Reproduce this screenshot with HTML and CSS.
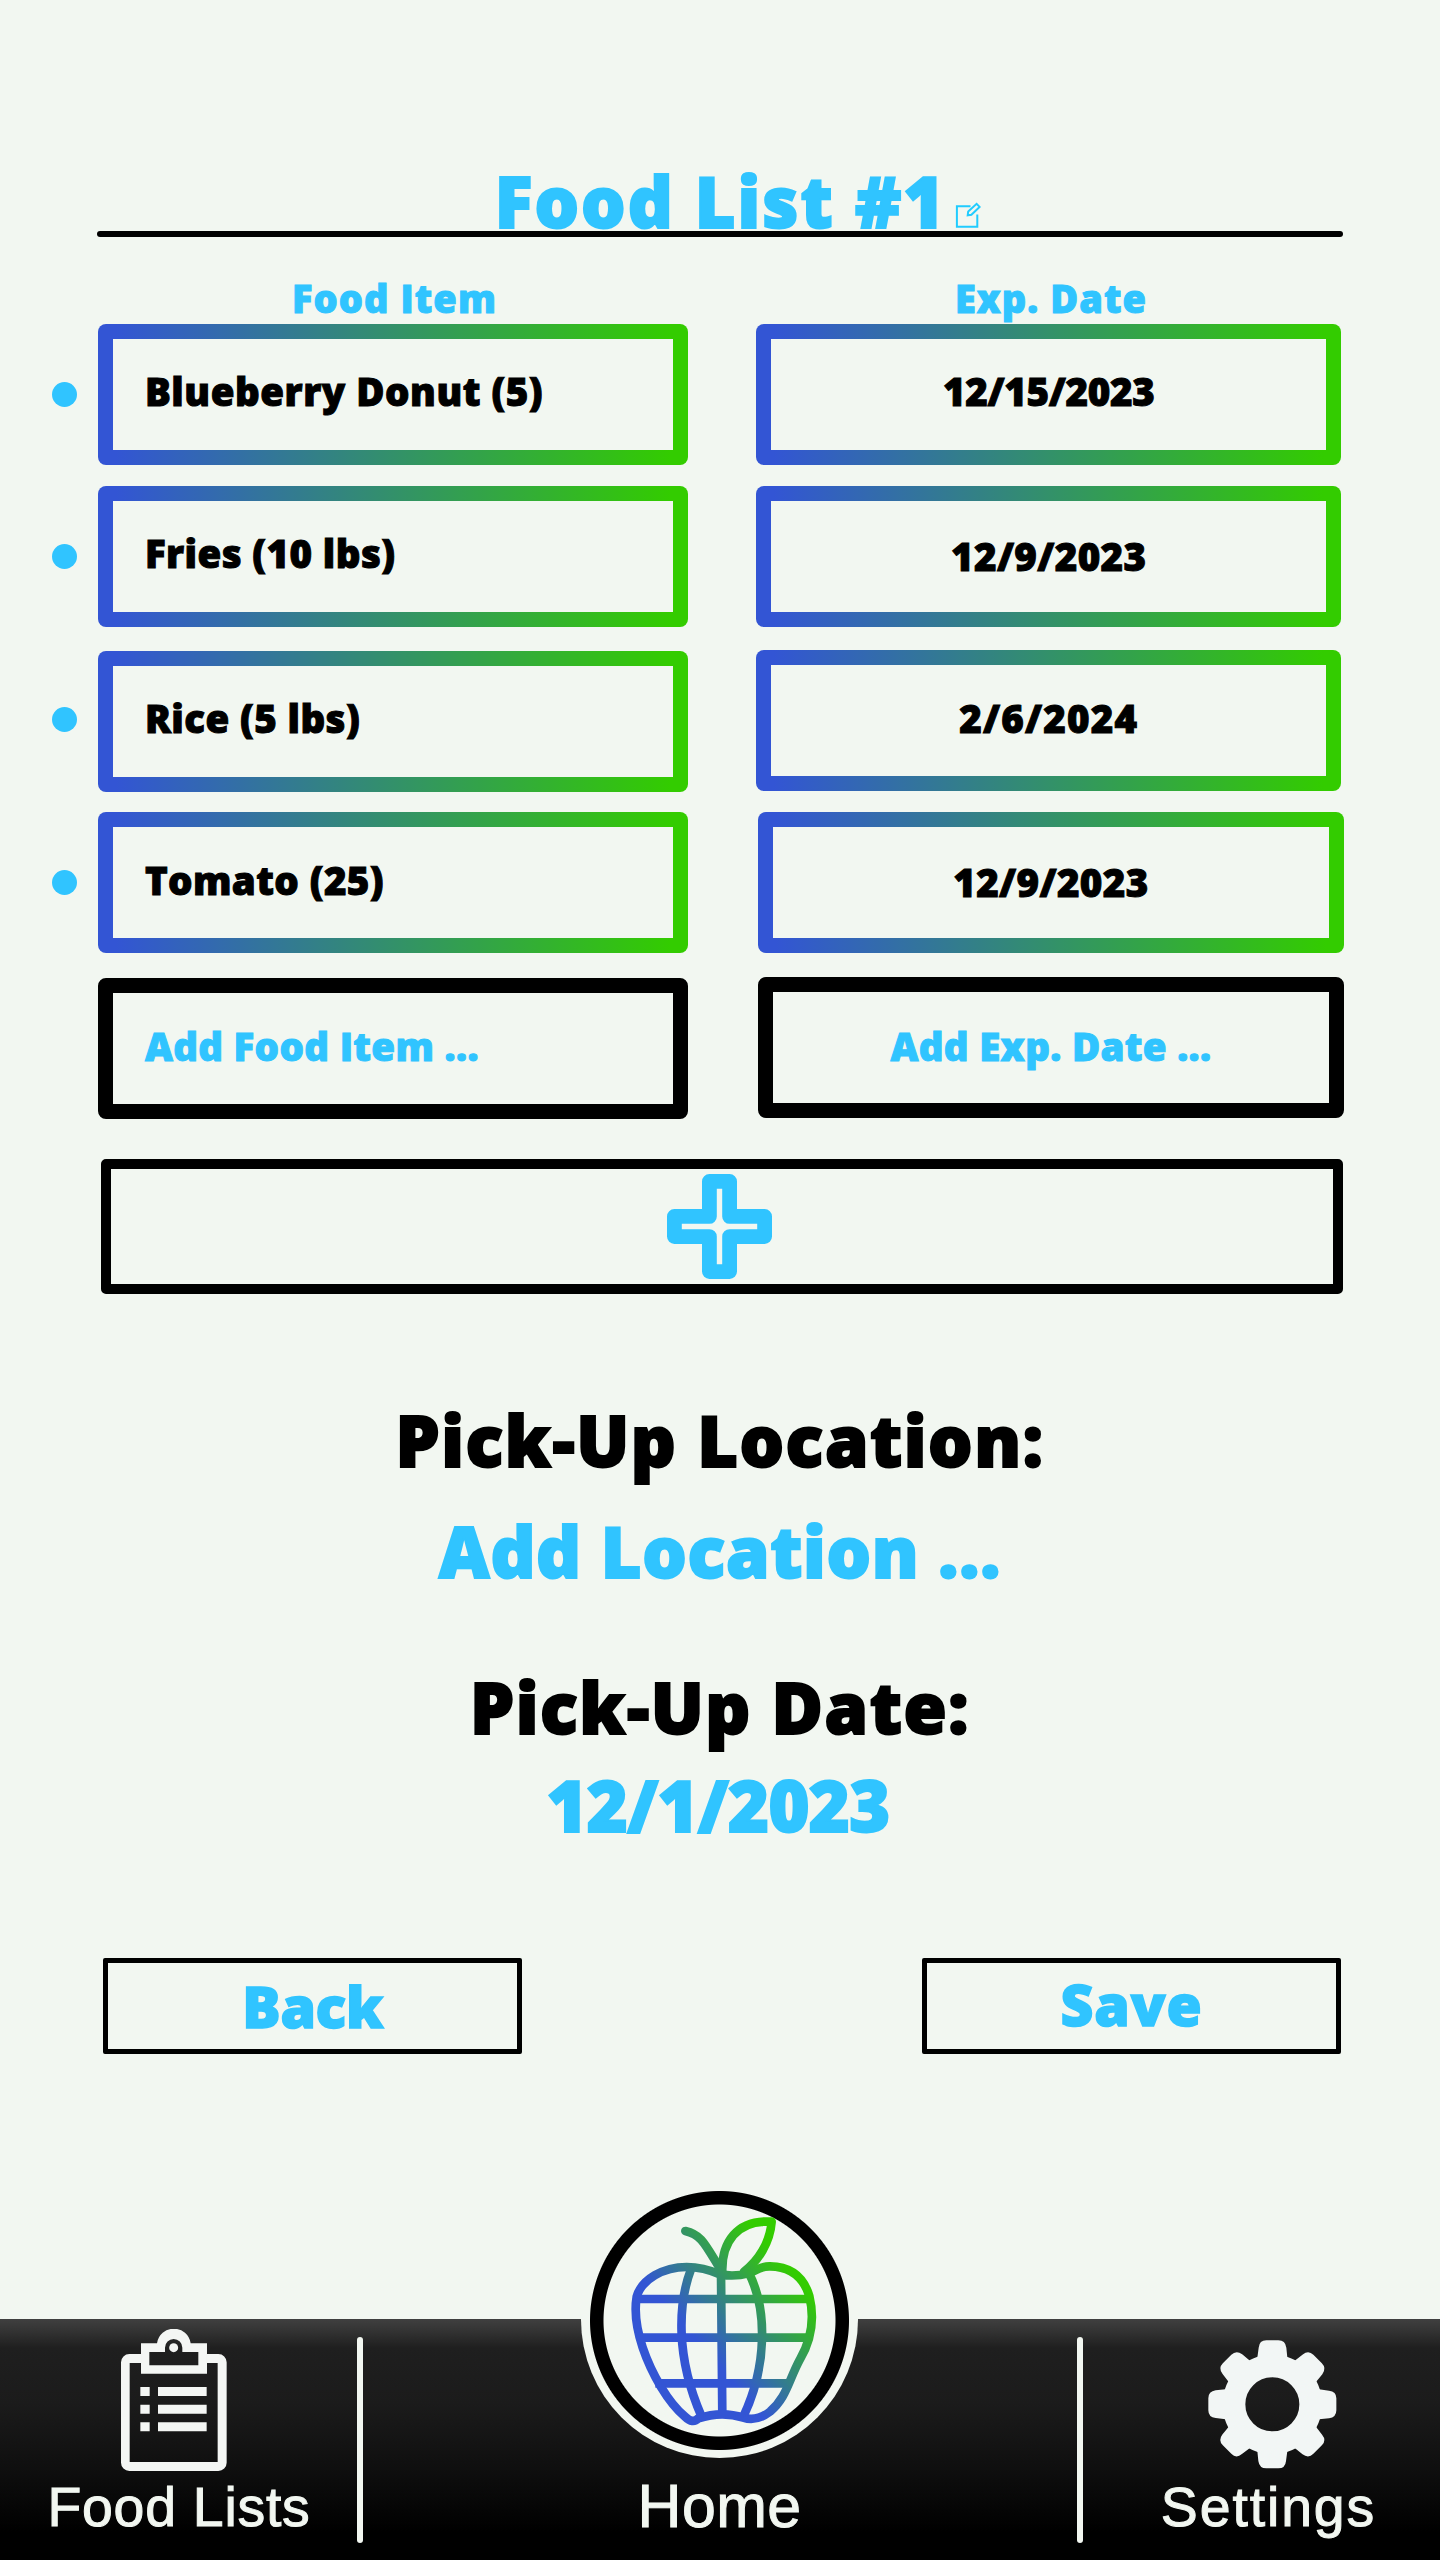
FILE: index.html
```html
<!DOCTYPE html>
<html lang="en">
<head>
<meta charset="utf-8">
<title>Food List #1</title>
<link rel="stylesheet" href="styles.css">
</head>
<body>
<main class="screen">
  <header class="title-bar">
    <h1 class="title">Food List #1</h1>
    <svg class="edit-icon" viewBox="956 202 26 26" fill="none" stroke="#20ccff" stroke-width="2"><path d="M971.5 206.3H957.9V226.7H978.3V214.5"/><path d="M968.7 215.3L969.2 211.4L977.6 203.8L980.6 206.9L972.4 214.8Z"/></svg>
  </header>
  <div class="rule"></div>

  <section class="list">
    <div class="list-head">
      <h2 class="head-item">Food Item</h2>
      <h2 class="head-date">Exp. Date</h2>
    </div>
    <div class="row row-1">
      <span class="dot"></span>
      <div class="cell cell-item"><span class="t">Blueberry Donut (5)</span></div>
      <div class="cell cell-date"><span class="t t-long">12/15/2023</span></div>
    </div>
    <div class="row row-2">
      <span class="dot"></span>
      <div class="cell cell-item"><span class="t">Fries (10 lbs)</span></div>
      <div class="cell cell-date"><span class="t">12/9/2023</span></div>
    </div>
    <div class="row row-3">
      <span class="dot"></span>
      <div class="cell cell-item"><span class="t">Rice (5 lbs)</span></div>
      <div class="cell cell-date"><span class="t t-short">2/6/2024</span></div>
    </div>
    <div class="row row-4">
      <span class="dot"></span>
      <div class="cell cell-item"><span class="t">Tomato (25)</span></div>
      <div class="cell cell-date"><span class="t">12/9/2023</span></div>
    </div>
    <div class="row row-5">
      <div class="cell cell-item cell-add"><span class="t">Add Food Item ...</span></div>
      <div class="cell cell-date cell-add"><span class="t">Add Exp. Date ...</span></div>
    </div>
    <div class="add-row">
      <svg class="plus-icon" viewBox="0 0 105 105" fill="none" stroke="#30c4ff" stroke-width="14.8" stroke-linejoin="round"><path d="M42.4 7.4H62.6V42.4H97.6V62.6H62.6V97.6H42.4V62.6H7.4V42.4H42.4Z"/></svg>
    </div>
  </section>

  <section class="pickup">
    <h2 class="label label-location">Pick-Up Location:</h2>
    <p class="value value-location">Add Location ...</p>
    <h2 class="label label-date">Pick-Up Date:</h2>
    <p class="value value-date">12/1/2023</p>
  </section>

  <div class="actions">
    <div class="button"><span class="bt">Back</span></div>
    <div class="button button-save"><span class="bt">Save</span></div>
  </div>
</main>

<nav class="nav">
  <div class="nav-item nav-lists">
    <svg class="icon-lists" viewBox="360 84 324 430" fill="#f4f6f4"><path d="M423 159H388A25 25 0 0 0 363 184V485A25 25 0 0 0 388 510H655A25 25 0 0 0 680 485V184A25 25 0 0 0 655 159H621V186H653V483H389V186H423Z"/><path fill-rule="evenodd" d="M423 127H471A51 51 0 0 1 572 127H621V218H423ZM448 153V193H595V153H547V140A26 26 0 0 0 495 140V153Z"/><circle cx="521" cy="140" r="13.5"/><path d="M421 258H449V285H421ZM474 258H620V285H474ZM421 311H449V338H421ZM474 311H620V338H474ZM421 364H449V391H421ZM474 364H620V391H474Z"/></svg>
    <span class="nav-label">Food Lists</span>
  </div>
  <span class="divider"></span>
  <div class="nav-item nav-home">
    <div class="home-badge">
      <svg class="icon-apple" viewBox="180 140 564 634" fill="none" stroke="url(#apple)" stroke-width="26" stroke-linecap="round" stroke-linejoin="round">
        <defs><linearGradient id="apple" gradientUnits="userSpaceOnUse" x1="400" y1="536" x2="664" y2="306"><stop offset="0" stop-color="#3355d4"/><stop offset="1" stop-color="#33cc00"/></linearGradient></defs>
        <path d="M453 316C420 302 390 293 350 293C280 293 215 330 200 382C192 430 203 490 218 535C245 615 295 700 345 742Q368 765 385 747Q455 724 520 745C550 755 575 746 600 727C650 685 655 635 690 570C725 510 735 450 718 380C700 320 660 292 600 291C570 290 560 304 535 312C510 319 480 320 453 316Z"/>
        <path d="M346 185C395 196 405 225 453 303"/>
        <path d="M457 312C453 220 500 150 605 157C600 220 565 275 522 307"/>
        <path stroke-linecap="butt" d="M453 310L457 740M363 300C325 400 315 560 395 742M537 312C592 420 592 590 520 742M200 389H722M208 505H716M256 642H664"/>
      </svg>
    </div>
    <span class="nav-label label-home">Home</span>
  </div>
  <span class="divider"></span>
  <div class="nav-item nav-settings">
    <svg class="icon-gear" viewBox="-196 -196 392 392" fill="#f2f6f5">
      <defs><path id="tooth" d="M-45 -140L-41 -170Q-39 -192 -18 -192H18Q39 -192 42 -170L45 -140Z"/></defs>
      <circle r="115" fill="none" stroke="#f2f6f5" stroke-width="68"/>
      <use href="#tooth"/><use href="#tooth" transform="rotate(45)"/><use href="#tooth" transform="rotate(90)"/><use href="#tooth" transform="rotate(135)"/><use href="#tooth" transform="rotate(180)"/><use href="#tooth" transform="rotate(225)"/><use href="#tooth" transform="rotate(270)"/><use href="#tooth" transform="rotate(315)"/>
    </svg>
    <span class="nav-label">Settings</span>
  </div>
</nav>
</body>
</html>
```

FILE: styles.css
```css
* { box-sizing: border-box; margin: 0; }
body {
  width: 1440px; height: 2560px;
  display: flex; flex-direction: column; justify-content: space-between;
  background: #f2f7f1; color: #000;
  font-family: "Open Sans", "Noto Sans", sans-serif; font-weight: 800;
}
h1, h2 { font-weight: 800; }
.screen { padding-top: 171px; }

.title-bar { display: flex; justify-content: center; align-items: flex-end; gap: 9px; height: 60px; padding: 0 0 3px 36px; }
.title { font-size: 70px; line-height: 60px; margin-bottom: -3px; color: #30c4ff; -webkit-text-stroke: 2px #30c4ff; letter-spacing: 2px; white-space: nowrap; }
.edit-icon { width: 26px; height: 26px; }
.rule { height: 5.6px; margin: 0 97px; background: #000; border-radius: 3px; }

.list { padding-top: 41.4px; }
.list-head { display: flex; height: 46px; color: #30c4ff; text-align: center; }
.list-head h2 { font-size: 38px; line-height: 40px; letter-spacing: 1.05px; -webkit-text-stroke: 1px #30c4ff; }
.head-item { width: 590px; margin-left: 99.5px; }
.head-date { width: 586px; margin-left: 68.5px; }

.row { display: grid; grid-template-columns: 46.4px 590px 586px; align-items: start; padding-left: 52px; height: 141px; }
.dot { align-self: center; width: 25px; height: 25px; border-radius: 50%; background: #30c4ff; }
.cell {
  grid-column: 2; display: flex; align-items: center; height: 140.6px; border: 15px solid transparent; border-radius: 8px;
  background: linear-gradient(#f2f7f1, #f2f7f1) padding-box, linear-gradient(90deg, #3355d4 3%, #33cc00 97%) border-box;
}
.cell-date { grid-column: 3; margin-left: 67.8px; width: 585.2px; justify-content: center; }
.cell-item { padding-left: 31.5px; }
.cell-add { background: none; border-color: #000; }
.t { font-size: 38.5px; line-height: 50px; letter-spacing: .4px; -webkit-text-stroke: 1px #000; white-space: nowrap; }
.t-long { letter-spacing: -.3px; }
.t-short { letter-spacing: 1.2px; }
.cell-add .t { color: #30c4ff; letter-spacing: .3px; -webkit-text-stroke-color: #30c4ff; }
.row-1 .cell { padding-bottom: 6px; }
.row-1 .t:not(.t-long) { letter-spacing: .52px; }
.row-2 { margin-top: 21px; }
.row-2 .cell-item { padding-bottom: 6px; }
.row-2 .cell-date { padding-bottom: 1px; }
.row-3 { margin-top: 24px; }
.row-3 .cell-item { padding-bottom: 7px; }
.row-3 .cell-date { padding-bottom: 4px; margin-top: -1px; }
.row-3 .dot { margin-bottom: 4px; }
.row-4 { margin-top: 20px; }
.row-4 .cell-item { padding-bottom: 5px; }
.row-4 .cell-date { margin-left: 70px; }
.row-5 { margin-top: 25px; }
.row-5 .cell-item { padding-bottom: 5px; }
.row-5 .cell-date { padding-bottom: 3px; margin: -1px 0 0 70px; }

.add-row { display: flex; align-items: center; justify-content: center; height: 135px; margin: 40px 97px 0 101px; border: 10px solid #000; border-radius: 5px; padding-right: 5px; }
.plus-icon { width: 105px; height: 105px; }

.pickup { padding-top: 106px; text-align: center; font-size: 70px; line-height: 80px; }
.label { font-size: 70px; letter-spacing: 1.55px; -webkit-text-stroke: 2px #000; }
.value { color: #30c4ff; letter-spacing: .7px; -webkit-text-stroke: 2px #30c4ff; }
.value-location { margin-top: 31px; }
.label-date { margin-top: 76px; }
.value-date { margin: 18.5px 4px 0 0; letter-spacing: -.65px; }

.actions { display: flex; justify-content: space-between; margin: 113px 99px 0 103.3px; }
.button { display: flex; align-items: center; justify-content: center; width: 419px; height: 96px; border: 5px solid #000; border-radius: 2px; }
.bt { font-size: 57px; line-height: 60px; letter-spacing: -.3px; color: #30c4ff; -webkit-text-stroke: 1.5px #30c4ff; }
.button-save { padding-bottom: 4px; }
.button-save .bt { letter-spacing: .9px; }

.nav {
  display: grid; grid-template-columns: 357px 6px 714px 6px 357px; height: 241px;
  background: linear-gradient(#404040 0, #333 5%, #1f1f1f 12%, #1b1b1b 35%, #0f0f0f 62%, #000 88%);
  font-family: "Liberation Sans", Arial, sans-serif; font-weight: 400; color: #f2f7f1;
}
.nav-item { display: flex; flex-direction: column; align-items: center; }
.divider { height: 206px; margin-top: 18px; border-radius: 3px; background: #f2f7f1; }
.nav-label { font-size: 55.4px; line-height: 64px; letter-spacing: .75px; white-space: nowrap; -webkit-text-stroke: 1px #f2f7f1; }
.icon-lists { width: 108px; height: 143.3px; margin: 9.5px 9px 3.5px 0; }
.nav-lists .nav-label { margin-left: 1px; }
.icon-gear { width: 130.7px; height: 130.7px; margin: 19.7px 0 6px 21px; }
.nav-settings .nav-label { margin-left: 14px; letter-spacing: 1.9px; }
.home-badge {
  display: flex; align-items: center; justify-content: center; flex: none;
  width: 277px; height: 277px; margin: -138.5px 1px 0 0; border-radius: 50%;
  background: radial-gradient(circle at 138.5px 139.5px, #f2f7f1 115.5px, #000 116.5px, #000 129px, #f2f7f1 130px);
}
.icon-apple { width: 188px; height: 211.3px; margin: 5px 0 0 9px; }
.nav .label-home { font-size: 60.8px; margin: 16px 1px 0 0; letter-spacing: .4px; }
```
